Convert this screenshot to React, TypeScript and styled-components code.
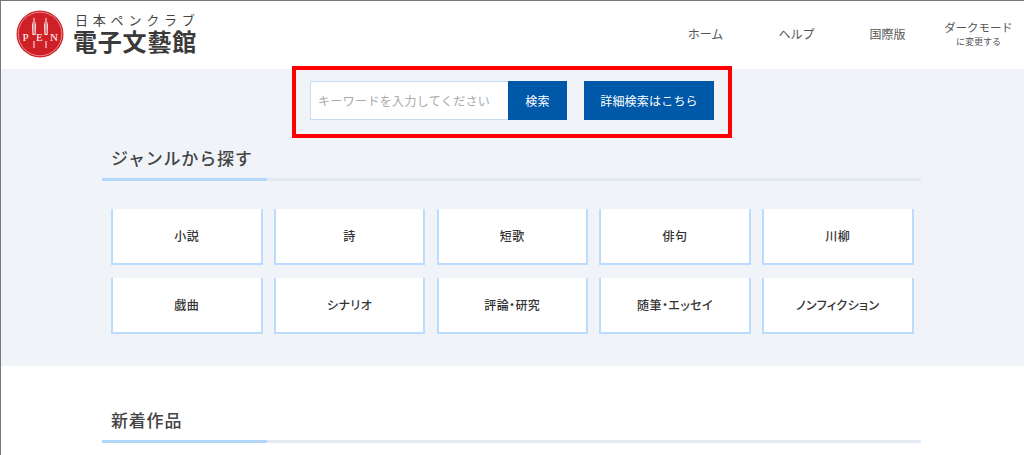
import styled, { createGlobalStyle } from 'styled-components';

const GlobalStyle = createGlobalStyle`
    html, body {
        margin: 0;
        padding: 0;
        height: 455px;
        overflow: hidden;
        background: #fff;
        font-family: "Noto Sans CJK JP", "Noto Sans", sans-serif;
        color: #333;
    }
    * {
        box-sizing: border-box;
    }
`;

const Page = styled.div`
    height: 455px;
    overflow: hidden;
    border-top: 1px solid #777;
    border-left: 1px solid #777;
`;

const Header = styled.header`
    display: flex;
    align-items: center;
    justify-content: space-between;
    height: 68px;
    padding: 0 0 3px 15px;
`;

const Brand = styled.div`
    display: flex;
    align-items: center;
    gap: 9px;
`;

const BrandText = styled.div`
    display: flex;
    flex-direction: column;
`;

const BrandSub = styled.span`
    font-size: 13px;
    line-height: 15px;
    letter-spacing: 4.8px;
    padding-left: 2px;
    white-space: nowrap;
    color: #444;
`;

const BrandName = styled.span`
    font-size: 24px;
    line-height: 28px;
    font-weight: 700;
    letter-spacing: 0.8px;
    color: #3a3a3a;
`;

const Nav = styled.nav`
    display: flex;
    align-items: center;
`;

const NavItem = styled.a<{ $width: number }>`
    display: flex;
    flex-direction: column;
    align-items: center;
    width: ${(p) => p.$width}px;
    font-size: 12px;
    line-height: 15px;
    color: #555;
`;

const NavLabel = styled.span`
    font-size: 11.4px;
    white-space: nowrap;
`;

const NavNote = styled.span`
    font-size: 9px;
    line-height: 13px;
`;

const GenreSection = styled.section`
    height: 297px;
    background: #f0f4f9;
`;

const SearchRow = styled.div`
    position: relative;
    display: flex;
    justify-content: center;
    width: 404px;
    padding-top: 12px;
    margin-left: 309px;
`;

const Highlight = styled.div`
    position: absolute;
    top: -3px;
    left: -18px;
    width: 440px;
    height: 72px;
    border: 4px solid #ff0000;
    pointer-events: none;
`;

const KeywordInput = styled.input`
    width: 198px;
    height: 39px;
    padding: 0 7px;
    border: 1px solid #c5dcf5;
    border-right: none;
    background: #fff;
    font-family: inherit;
    font-size: 12px;
    letter-spacing: 0.35px;
    outline: none;

    &::placeholder {
        color: #aaa;
        opacity: 1;
    }
`;

const BlueButton = styled.button<{ $width: number; $gap?: number }>`
    width: ${(p) => p.$width}px;
    height: 39px;
    margin-left: ${(p) => p.$gap ?? 0}px;
    padding: 0;
    border: none;
    background: #0058a9;
    color: #fff;
    font-family: inherit;
    font-size: 12px;
    letter-spacing: 0.2px;
`;

const Container = styled.div<{ $top: number }>`
    width: 819px;
    margin-left: 101px;
    padding-top: ${(p) => p.$top}px;
`;

const Heading = styled.h2`
    position: relative;
    margin: 0;
    padding: 0 0 8px 9px;
    border-bottom: 3px solid #e3eaf3;
    font-size: 17px;
    line-height: 25px;
    font-weight: 500;
    letter-spacing: 0.8px;
    color: #444;

    &::after {
        content: "";
        position: absolute;
        left: 0;
        bottom: -3px;
        width: 165px;
        height: 3px;
        background: #b3d6fb;
    }
`;

const GenreGrid = styled.div`
    display: grid;
    grid-template-columns: repeat(5, 151.5px);
    grid-auto-rows: 56px;
    column-gap: 11.25px;
    row-gap: 13px;
    margin: 28px 0 0 9px;
`;

const GenreCard = styled.a`
    display: flex;
    align-items: center;
    justify-content: center;
    padding-bottom: 2px;
    border: 2px solid #bcdcff;
    border-top: none;
    background: #fff;
    font-size: 12px;
    font-weight: 500;
    font-feature-settings: "palt";
    letter-spacing: 0.4px;
    color: #333;
`;

const genres = [
    '小説',
    '詩',
    '短歌',
    '俳句',
    '川柳',
    '戯曲',
    'シナリオ',
    '評論・研究',
    '随筆・エッセイ',
    'ノンフィクション',
];

const PenLogo = () => (
    <svg width="48" height="48" viewBox="0 0 48 48">
        <circle cx="24" cy="24" r="23.5" fill="#cf2027" />
        <circle cx="24" cy="24" r="21.8" fill="none" stroke="#eeb5b5" strokeWidth="0.7" />
        <path d="M18 7 L20 15 L19.6 25 L16.4 25 L16 15 Z" fill="#f6e4e4" />
        <path d="M18 10 L18 24" stroke="#cf2027" strokeWidth="0.9" />
        <path d="M18 31 L18 38" stroke="#f6e4e4" strokeWidth="1.1" />
        <path d="M30 7 L32 15 L31.6 25 L28.4 25 L28 15 Z" fill="#f6e4e4" />
        <path d="M30 10 L30 24" stroke="#cf2027" strokeWidth="0.9" />
        <path d="M30 31 L30 38" stroke="#f6e4e4" strokeWidth="1.1" />
        <g fill="#fff" fontSize="11" fontFamily="Liberation Serif, serif">
            <text x="6.5" y="31">P</text>
            <text x="20" y="31">E</text>
            <text x="34" y="31">N</text>
        </g>
    </svg>
);

export default function App() {
    return (
        <Page>
            <GlobalStyle />
            <Header>
                <Brand>
                    <PenLogo />
                    <BrandText>
                        <BrandSub>日本ペンクラブ</BrandSub>
                        <BrandName>電子文藝館</BrandName>
                    </BrandText>
                </Brand>
                <Nav>
                    <NavItem $width={91}>ホーム</NavItem>
                    <NavItem $width={91}>ヘルプ</NavItem>
                    <NavItem $width={91}>国際版</NavItem>
                    <NavItem $width={91}>
                        <NavLabel>ダークモード</NavLabel>
                        <NavNote>に変更する</NavNote>
                    </NavItem>
                </Nav>
            </Header>
            <GenreSection>
                <SearchRow>
                    <KeywordInput placeholder="キーワードを入力してください" />
                    <BlueButton $width={59}>検索</BlueButton>
                    <BlueButton $width={130} $gap={17}>詳細検索はこちら</BlueButton>
                    <Highlight />
                </SearchRow>
                <Container $top={25}>
                    <Heading>ジャンルから探す</Heading>
                    <GenreGrid>
                        {genres.map((g) => (
                            <GenreCard key={g}>{g}</GenreCard>
                        ))}
                    </GenreGrid>
                </Container>
            </GenreSection>
            <Container $top={41}>
                <Heading>新着作品</Heading>
            </Container>
        </Page>
    );
}
